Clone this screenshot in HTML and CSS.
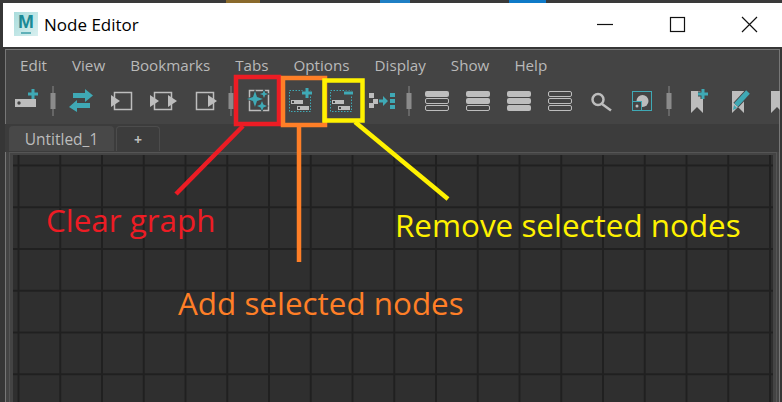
FILE: index.html
```html
<!DOCTYPE html>
<html lang="en">
<head>
<meta charset="utf-8">
<title>Node Editor</title>
<link rel="stylesheet" href="styles.css">
</head>
<body>
<div class="screen">
  <div class="strip"><span class="bit bit-a"></span><span class="bit bit-b"></span><span class="bit bit-c"></span></div>
  <header class="titlebar">
    <div class="logo"><span class="logo-m">M</span><span class="logo-sub"></span></div>
    <div class="title">Node Editor</div>
    <div class="controls">
      <svg class="ctl" viewBox="0 0 70 44"><path d="M25 21.5h16"/></svg>
      <svg class="ctl" viewBox="0 0 70 44"><rect x="28.5" y="14.5" width="14" height="14"/></svg>
      <svg class="ctl" viewBox="0 0 70 44"><path d="M30 14l15 15M45 14l-15 15"/></svg>
    </div>
  </header>
  <main class="window">
    <nav class="menu"><span>Edit</span><span>View</span><span>Bookmarks</span><span>Tabs</span><span>Options</span><span>Display</span><span>Show</span><span>Help</span></nav>
    <div class="toolbar">
      <svg class="slot" viewBox="0 0 41 32"><rect class="g" x="10" y="15" width="21" height="8"/><circle class="d" cx="14" cy="19" r="1.7"/><path class="halo" d="M28 5v10M23 10h10"/><path class="t" d="M28 5v10M23 10h10"/></svg>
      <svg class="sep" viewBox="0 0 14 32"><path d="M7 2v30"/><rect x="4.5" y="9" width="5" height="16"/></svg>
      <svg class="slot" viewBox="0 0 41 32"><path class="tf" d="M33 11.5L25 5v4H13v5h12v4zM9 23l8-7v3h13v5H17v4z"/></svg>
      <svg class="slot" viewBox="0 0 41 32"><rect class="o" x="13.5" y="8.5" width="17" height="17"/><path class="gf" d="M19 17l-9-6v12z"/></svg>
      <svg class="slot" viewBox="0 0 41 32"><rect class="o" x="12.5" y="8.5" width="17" height="17"/><path class="gf" d="M17 17l-9-6v12zM35 17l-9-6v12z"/></svg>
      <svg class="slot" viewBox="0 0 41 32"><rect class="o" x="13.5" y="8.5" width="17" height="17"/><path class="gf" d="M34 17l-9-6v12z"/></svg>
      <svg class="sep" viewBox="0 0 14 32"><path d="M7 2v30"/><rect x="4.5" y="9" width="5" height="16"/></svg>
      <svg class="slot" viewBox="0 0 41 32"><rect class="o" x="11.5" y="6.5" width="19" height="20"/><path class="star" d="M17 7l2 6 6 2-6 2-2 6-2-6-6-2 6-2z"/><path class="star" d="M26 6l1.2 3 3 1-3 1-1.2 3-1.2-3-3-1 3-1z"/><path class="star" d="M24 17l1.4 3.6 3.6 1.4-3.6 1.4-1.4 3.6-1.4-3.6-3.6-1.4 3.6-1.4z"/></svg>
      <svg class="slot" viewBox="0 0 41 32"><rect class="dot" x="10.5" y="6.5" width="21" height="21"/><rect class="g" x="12" y="16" width="12" height="4"/><rect class="g" x="18" y="22" width="12" height="4"/><rect class="d" x="13" y="17" width="2" height="2"/><rect class="d" x="19" y="23" width="2" height="2"/><path class="halo" d="M28 4v10M23 9h10"/><path class="t" d="M28 4v10M23 9h10"/></svg>
      <svg class="slot" viewBox="0 0 41 32"><rect class="dot" x="10.5" y="6.5" width="21" height="21"/><rect class="g" x="12" y="16" width="12" height="4"/><rect class="g" x="18" y="22" width="12" height="4"/><rect class="d" x="13" y="17" width="2" height="2"/><rect class="d" x="19" y="23" width="2" height="2"/><path class="halo" d="M24 9h9"/><path class="t" d="M24 9h9"/></svg>
      <svg class="slot" viewBox="0 0 41 32"><rect class="g" x="8" y="9" width="5" height="5"/><rect class="g" x="12" y="15" width="5" height="5"/><rect class="g" x="8" y="19" width="5" height="5"/><path class="tf" d="M18 15.5h4V12l5 5-5 5v-3.500h-4z"/><rect class="tf" x="29" y="9" width="5" height="4"/><rect class="tf" x="29" y="15" width="5" height="4"/><rect class="tf" x="29" y="21" width="5" height="4"/></svg>
      <svg class="sep" viewBox="0 0 14 32"><path d="M7 2v30"/><rect x="4.500" y="9" width="5" height="16"/></svg>
      <svg class="slot" viewBox="0 0 41 32"><rect class="fill" x="9" y="7" width="24" height="6" rx="2"/><rect class="line" x="9.500" y="14.500" width="23" height="5" rx="1.500"/><rect class="line" x="9.500" y="21.500" width="23" height="5" rx="1.500"/></svg>
      <svg class="slot" viewBox="0 0 41 32"><rect class="fill" x="9" y="7" width="24" height="6" rx="2"/><rect class="fill" x="9" y="14" width="24" height="6" rx="2"/><rect class="line" x="9.500" y="21.500" width="23" height="5" rx="1.500"/></svg>
      <svg class="slot" viewBox="0 0 41 32"><rect class="fill" x="9" y="7" width="24" height="6" rx="2"/><rect class="fill" x="9" y="14" width="24" height="6" rx="2"/><rect class="fill" x="9" y="21" width="24" height="6" rx="2"/></svg>
      <svg class="slot" viewBox="0 0 41 32"><rect class="line" x="9.500" y="7.500" width="23" height="5" rx="1.500"/><rect class="line" x="9.500" y="14.500" width="23" height="5" rx="1.500"/><rect class="line" x="9.500" y="21.500" width="23" height="5" rx="1.500"/></svg>
      <svg class="slot" viewBox="0 0 41 32"><circle class="lens" cx="18" cy="15.500" r="5.500"/><path class="lens" d="M22 20l9 6.500"/></svg>
      <svg class="slot" viewBox="0 0 41 32"><circle class="gf" cx="21.500" cy="17" r="6"/><rect class="teal-o" x="11.500" y="7.500" width="19" height="19"/><rect class="teal-box" x="11.500" y="17.500" width="9" height="9"/><circle class="gf" cx="16" cy="22" r="1.500"/></svg>
      <svg class="sep" viewBox="0 0 14 32"><path d="M7 2v30"/><rect x="4.500" y="9" width="5" height="16"/></svg>
      <svg class="slot" viewBox="0 0 41 32"><path class="gf" d="M15 7h12v22l-6-6-6 6z"/><path class="halo" d="M27 5v10M22 10h10"/><path class="t" d="M27 5v10M22 10h10"/></svg>
      <svg class="slot" viewBox="0 0 41 32"><path class="gf" d="M15 7h12v22l-6-6-6 6z"/><path class="pen-halo" d="M19 21L31 8"/><path class="pen" d="M19 21L31 8"/><path class="tf" d="M16 26l1-5 3 3z"/></svg>
      <svg class="slot" viewBox="0 0 41 32"><path class="gf" d="M13 7h12v22l-6-6-6 6z"/></svg>
    </div>
    <div class="tabs"><div class="tab tab-on">Untitled_1</div><div class="tab tab-add">+</div></div>
    <section class="panel"><div class="graph"></div></section>
  </main>
  <svg class="marks" viewBox="0 0 782 402">
    <path class="m-red" d="M243 126L176 194"/>
    <path class="m-orange" d="M299 126V262"/>
    <path class="m-yellow" d="M355 122L448 199"/>
    <rect class="m-red" x="236" y="77" width="43" height="47"/>
    <rect class="m-orange" x="283" y="78" width="42" height="47"/>
    <rect class="m-yellow" x="324.500" y="80.500" width="38" height="40"/>
  </svg>
  <div class="note note-clear">Clear graph</div>
  <div class="note note-add">Add selected nodes</div>
  <div class="note note-remove">Remove selected nodes</div>
</div>
</body>
</html>
```
FILE: styles.css
```css
* { box-sizing: border-box; }
html, body { margin: 0; padding: 0; }
body { width: 782px; height: 402px; overflow: hidden; background: #333; }
.screen { position: relative; width: 782px; height: 402px; overflow: hidden; background: #363636; display: flex; flex-direction: column; }

.strip { height: 3px; display: flex; background: #3a3a3a; flex: none; }
.bit { display: block; height: 3px; }
.bit-a { width: 34px; margin-left: 226px; background: #8a6a2c; }
.bit-b { width: 30px; margin-left: 120px; background: #1f7fc4; }
.bit-c { width: 37px; margin-left: 99px; background: #0f7ac8; }

.titlebar { height: 44px; margin-left: 3px; background: #fff; display: flex; align-items: center; flex: none; }
.logo { width: 24px; height: 24px; margin-left: 11px; margin-top: -2px; background: linear-gradient(135deg, #a9dcdc, #d8efef); display: flex; flex-direction: column; align-items: center; font-family: "Liberation Sans", sans-serif; color: #1b8a96; }
.logo-m { display: block; font-size: 19px; font-weight: 700; line-height: 19px; }
.logo-sub { display: block; width: 10px; height: 2px; margin-top: 1px; background: #5fb0b8; }
.title { margin-left: 6px; font-family: "Open Sans", sans-serif; font-size: 17px; color: #000; margin-top: -1px; }
.controls { margin-left: auto; display: flex; }
.ctl { width: 70px; height: 44px; display: block; fill: none; stroke: #111; stroke-width: 1.2; }

.window { margin: 2px 2px 0 5px; flex: 1; min-height: 0; background: #444; box-shadow: inset 1px 1px 0 #777, inset -1px 0 0 #777; display: flex; flex-direction: column; }
.menu { height: 31px; padding: 0 0 0 15px; display: flex; gap: 25px; align-items: center; flex: none; font-family: "Open Sans", sans-serif; font-size: 15.2px; color: #b9b9b9; }
.toolbar { margin-top: 4px; height: 32px; display: flex; flex: none; overflow: hidden; }
.slot { width: 41px; height: 32px; flex: none; display: block; }
.sep { width: 14px; height: 32px; flex: none; display: block; }
.sep path { stroke: #888; stroke-width: 1; fill: none; }
.sep rect { fill: #8b8b8b; }

.g { fill: #bdbdbd; }
.gf { fill: #bdbdbd; }
.d { fill: #444; }
.t { fill: none; stroke: #3fa9b5; stroke-width: 3; }
.tf { fill: #3fa9b5; }
.halo { fill: none; stroke: #444; stroke-width: 5; }
.o { fill: none; stroke: #bdbdbd; stroke-width: 1.5; }
.star { fill: #3fa9b5; stroke: #444; stroke-width: 1.500; paint-order: stroke; }
.dot { fill: none; stroke: #3fa9b5; stroke-width: 1; stroke-dasharray: 1.500 1.500; }
.fill { fill: #bdbdbd; }
.line { fill: none; stroke: #bdbdbd; stroke-width: 1; }
.lens { fill: none; stroke: #bdbdbd; stroke-width: 2.500; }
.teal-o { fill: none; stroke: #3fa9b5; stroke-width: 1; }
.teal-box { fill: #444; stroke: #3fa9b5; stroke-width: 1; }
.pen { fill: none; stroke: #3fa9b5; stroke-width: 5; }
.pen-halo { fill: none; stroke: #444; stroke-width: 7; }

.tabs { height: 28px; padding: 2px 0 0 4px; display: flex; gap: 2px; background: #3c3c3c; margin: 8px 1px 0 0; flex: none; font-family: "Open Sans", sans-serif; font-size: 15.5px; color: #bcbcbc; }
.tab { height: 25px; border-radius: 4px 4px 0 0; display: flex; align-items: center; justify-content: center; }
.tab-on { width: 105px; background: #484848; }
.tab-add { width: 44px; border: 1px solid #4c4c4c; border-bottom: 0; font-size: 14px; font-weight: 700; }
.panel { flex: 1; min-height: 0; margin: 0 3px 0 4px; padding: 2px 3px 0 3px; background: #444; border: 1px solid #555; border-bottom: 0; display: flex; }
.graph { flex: 1; background-color: #2f2f2f; background-image: linear-gradient(90deg, #202020 1.5px, transparent 1.5px), linear-gradient(#202020 1.5px, transparent 1.5px); background-size: 41.75px 41.75px; background-position: 4.5px 9.5px; }

.marks { position: absolute; left: 0; top: 0; width: 782px; height: 402px; fill: none; }
.m-red { stroke: #ed1c24; stroke-width: 4.500; }
.m-orange { stroke: #ff7f27; stroke-width: 4.500; }
.m-yellow { stroke: #fff200; stroke-width: 4.500; }
.note { position: absolute; font-family: "Open Sans", sans-serif; font-size: 31.4px; line-height: 36px; white-space: nowrap; }
.note-clear { left: 46px; top: 202px; color: #ed1c24; }
.note-add { left: 178px; top: 285px; color: #ff7f27; }
.note-remove { left: 395px; top: 207px; color: #fff200; }
```
